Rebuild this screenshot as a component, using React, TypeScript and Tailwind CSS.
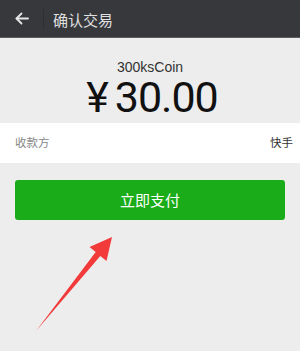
import React from "react";

export default function App() {
  return (
    <div
      className="w-[300px] h-[351px] bg-[#ededed] overflow-hidden relative"
      style={{ fontFamily: '"Liberation Sans", "Noto Sans CJK SC", sans-serif' }}
    >
      <div className="h-[38px] bg-[#36383c] border-b border-[#5c5d61] flex items-center">
        <div className="w-[43px] h-full flex items-center pl-[15px]">
          <svg width="14" height="13" viewBox="0 0 14 13" fill="none" stroke="#e6e6e6" strokeWidth="1.8" strokeLinecap="round" strokeLinejoin="round">
            <path d="M13 6.5H1.5" />
            <path d="M6.5 1.5L1.5 6.5L6.5 11.5" />
          </svg>
        </div>
        <div className="w-px h-[20px] bg-[#2e2f33]" />
        <div className="pl-[9px] text-[15px] text-[#e0e0e0] leading-none pt-[2px]" style={{ fontFamily: '"Noto Sans CJK SC", sans-serif' }}>
          确认交易
        </div>
      </div>

      <div className="pt-[22px] pb-[7px] flex flex-col items-center">
        <div className="text-[14px] leading-[14px] text-[#333]">300ksCoin</div>
        <div className="mt-[4px] h-[38px] flex items-end text-[43px] leading-[38px] text-[#111] pl-[4px]" style={{ fontFamily: 'Roboto, "Liberation Sans", sans-serif' }}>
          <span className="font-normal mr-[6px]">¥</span>
          <span className="font-normal tracking-[-1px]">30.00</span>
        </div>
      </div>

      <div className="h-[40px] bg-white flex items-center justify-between pl-[15px] pr-[7px]" style={{ fontFamily: '"Noto Sans CJK SC", sans-serif' }}>
        <span className="text-[11.5px] text-[#888]">收款方</span>
        <span className="text-[11.5px] text-[#333]">快手</span>
      </div>

      <div className="px-[15px] pt-[17px]">
        <div className="h-[40px] rounded-[3px] bg-[#1aad19] flex items-center justify-center text-white text-[15px]" style={{ fontFamily: '"Noto Sans CJK SC", sans-serif' }}>
          立即支付
        </div>
      </div>

      <svg className="absolute left-0 top-0" width="300" height="351" viewBox="0 0 300 351">
        <polygon points="112,237 106.5,261 100.3,255.9 36,331 95.7,252.1 89.5,247" fill="#f23a3a" />
      </svg>
    </div>
  );
}
